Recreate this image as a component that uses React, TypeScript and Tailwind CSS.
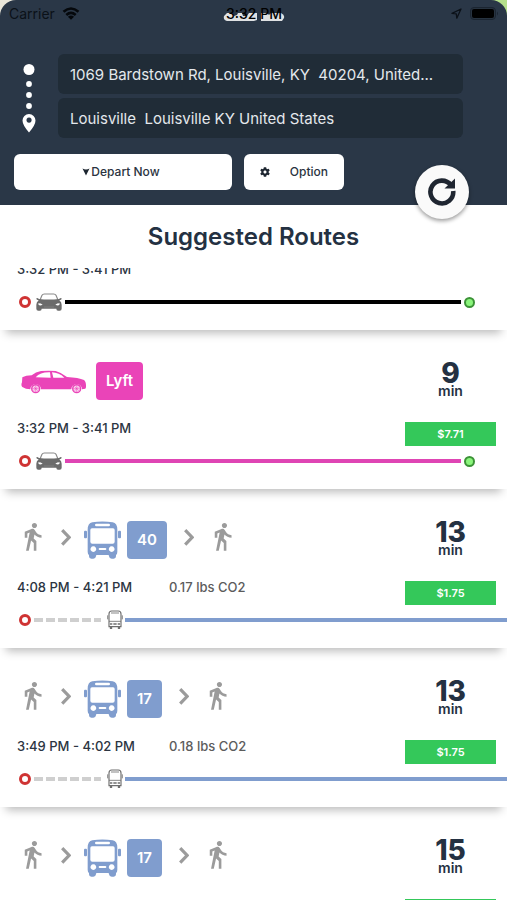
// Import dependencies
import { useState } from 'react';
import { FaCog } from 'react-icons/fa';
import { MdDirectionsWalk } from 'react-icons/md';

type Route = {
    id: number;
    mode: 'car' | 'bus';
    label?: string;
    badge: string;
    line: string;
    minutes?: number;
    time: string;
    co2?: string;
    price?: string;
};

// Route data
const routes: Route[] = [
    { id: 1, mode: 'car', badge: 'bg-black', line: 'bg-black', time: '3:32 PM - 3:41 PM' },
    { id: 2, mode: 'car', label: 'Lyft', badge: 'bg-[#ea44b8]', line: 'bg-[#df45b4]', minutes: 9, time: '3:32 PM - 3:41 PM', price: '$7.71' },
    { id: 3, mode: 'bus', label: '40', badge: 'bg-[#809dce]', line: 'bg-[#809dce]', minutes: 13, time: '4:08 PM - 4:21 PM', co2: '0.17 lbs CO2', price: '$1.75' },
    { id: 4, mode: 'bus', label: '17', badge: 'bg-[#809dce]', line: 'bg-[#809dce]', minutes: 13, time: '3:49 PM - 4:02 PM', co2: '0.18 lbs CO2', price: '$1.75' },
    { id: 5, mode: 'bus', label: '17', badge: 'bg-[#809dce]', line: 'bg-[#809dce]', minutes: 15, time: '4:19 PM - 4:34 PM', co2: '0.18 lbs CO2', price: '$1.75' },
];

// Icons
const Chevron = () => (
    <svg className="h-8 w-[10px] shrink-0" viewBox="0 0 10 32" fill="none" stroke="#9b9b9b" strokeWidth="3.2">
        <path d="M1.2 9.2 8.2 16.4 1.2 23.6" />
    </svg>
);

const BusIcon = () => (
    <svg className="h-[38px] w-[37px] shrink-0" viewBox="0 0 111 114" fill="#809dce">
        <rect x="0" y="29" width="9" height="23" rx="3" />
        <rect x="102" y="29" width="9" height="23" rx="3" />
        <path fillRule="evenodd" d="M11 26Q11 7 25 4 55-1 86 4q14 3 14 22v66q0 8-4 10v4q0 7-7 7h-6q-7 0-8-7l-1-4H37l-1 4q-1 7-8 7h-6q-7 0-7-7v-4q-4-2-4-10ZM37 8q-4 0-4 4t4 4h37q4 0 4-4t-4-4ZM24 22q-5 0-5 5v35q0 6 6 6h61q6 0 6-6V27q0-5-5-5ZM28 76a8.500 8.500 0 1 0 .1 0ZM83 76a8.500 8.500 0 1 0 .1 0ZM47 81q-3 0-3 3t3 3h17q3 0 3-3t-3-3Z" />
    </svg>
);

const SideCarIcon = () => (
    <svg className="h-[38px] w-[66px] shrink-0" viewBox="62 52 198 114">
        <path fill="#ea44b8" fillRule="evenodd" d="M66 98Q76 92 94 92 106 82 122 79 145 77 166 79 184 84 200 97 235 99 251 106 258 111 257 128L255 132 245 134A16 16 0 0 0 213 134H122A16 16 0 0 0 90 134Q76 134 66 127 61 122 65 113ZM106 98 151 99 149 83Q120 82 106 98ZM155 83 159 99H192Q176 84 155 83Z" />
        <circle cx="106" cy="132" r="14" fill="#ea44b8" />
        <circle cx="106" cy="132" r="9.500" fill="#fbd5ef" />
        <circle cx="229" cy="132" r="14" fill="#ea44b8" />
        <circle cx="229" cy="132" r="9.500" fill="#fbd5ef" />
        <path stroke="#ea44b8" strokeWidth="1.500" d="M97 132h18M106 123v18M100 126l12 12M112 126l-12 12M220 132h18M229 123v18M223 126l12 12M235 126l-12 12" />
    </svg>
);

const FrontCarIcon = () => (
    <svg className="h-[18px] w-[26px] shrink-0" viewBox="0 0 78 54" preserveAspectRatio="none">
        <path d="M12 21 18 7q2-4 7-4h28q5 0 7 4l6 14" fill="none" stroke="#8a8a8a" strokeWidth="3.500" />
        <path fill="#6b6b6b" d="M9 18q-7-5-8-1 0 4 7 5Q1 27 1 35v12q0 6 6 6h5q5 0 5-6h44q0 6 5 6h5q6 0 6-6V35q0-8-7-13 7-1 7-5-1-4-8 1-30 3-60 0Z" />
        <path fill="#fff" d="M7 31q8 0 13 4-6 3-10 2-4-2-3-6ZM71 31q-8 0-13 4 6 3 10 2 4-2 3-6Z" />
        <path stroke="#888" strokeWidth="2" d="M24 42h30" />
    </svg>
);

const SmallBusIcon = () => (
    <svg className="h-5 w-4 shrink-0" viewBox="0 0 48 60" fill="none" stroke="#6f6f6f" strokeWidth="3.500">
        <path d="M6 50V12Q6 3 14 3h20q8 0 8 9v38Z" />
        <path d="M12 9h24M6 34h36" strokeWidth="2.500" />
        <path d="M2 16v12M46 16v12" strokeWidth="2.500" />
        <path d="M9 42h7M32 42h7M19 42h10" strokeWidth="4" />
        <path d="M12 50v7M36 50v7" strokeWidth="7" />
    </svg>
);

// Status bar
const StatusBar = () => (
    <div className="grid h-[27px] grid-cols-3 items-center pl-[9px] pr-2 text-[14px] text-[#0b1118]">
        <div className="flex items-center gap-[7px]">
            Carrier
            <svg className="h-[13px] w-[18px]" viewBox="0 0 18 13" fill="none" stroke="#05080c" strokeWidth="2.600">
                <path d="M1.500 4.800Q9-1.800 16.500 4.800M4.300 7.900Q9 3.800 13.700 7.900" />
                <path d="M9 12.800 5.900 9.700Q9 7.400 12.100 9.700Z" fill="#05080c" stroke="none" />
            </svg>
        </div>
        <div className="relative text-center">
            <svg className="absolute left-1/2 top-1/2 h-[9px] w-[62px] -translate-x-1/2 -translate-y-[2px]" viewBox="0 0 62 9" fill="#dfe1e3">
                <path d="M4 1h5l2 3 3-1 1-2h4l1 3h4l2-3h8v7l-3 1H4Q0 8 1 4ZM38 1h6l2 2 2-2h10q4 2 3 5l-2 3H38Z" />
            </svg>
            <span className="relative font-medium text-black">3:32 PM</span>
        </div>
        <div className="flex items-center justify-end gap-2">
            <svg className="h-[11px] w-[11px]" viewBox="0 0 11 11" fill="none" stroke="#0b1118" strokeWidth="1.300" strokeLinejoin="round">
                <path d="M10 1 1 5.400l4.300.5.500 4.300Z" />
            </svg>
            <svg className="h-[13px] w-[29px]" viewBox="0 0 29 13">
                <rect x=".5" y=".5" width="25" height="12" rx="3.500" fill="#273340" stroke="#1b2531" />
                <rect x="2" y="2" width="22" height="9" rx="2" fill="#000" />
                <path d="M27 4.500q2 2 0 4Z" fill="#1b2531" />
            </svg>
        </div>
    </div>
);

// Origin and destination form
const SearchHeader = () => {
    const [origin, setOrigin] = useState('1069 Bardstown Rd, Louisville, KY  40204, United...');
    const [destination, setDestination] = useState('Louisville  Louisville KY United States');

    return (
        <header className="bg-[linear-gradient(to_right,#e9e6da_50%,#b5e08b_50%)]">
            <div className="relative rounded-t-[16px] bg-[#2a3747] pb-[15px]">
                <StatusBar />
                <div className="mt-[27px] flex pr-11">
                    <svg className="ml-[21px] mr-[21px] mt-[9px] h-[70px] w-4 shrink-0" viewBox="0 0 16 70" fill="#fff">
                        <circle cx="8" cy="6.500" r="5.500" />
                        <circle cx="8" cy="21" r="2.900" />
                        <circle cx="8" cy="32" r="2.900" />
                        <circle cx="8" cy="43" r="2.900" />
                        <path fillRule="evenodd" d="M8 69.500Q1.500 62 1.500 57.500a6.500 6.500 0 0 1 13 0Q14.500 62 8 69.500ZM8 54.500a2.600 2.600 0 1 0 .1 0Z" />
                    </svg>
                    <div className="flex min-w-0 flex-1 flex-col gap-1">
                        <input
                        aria-label="Origin"
                        className="h-10 w-full rounded-md bg-[#202c37] px-3 text-[15px] text-[#e4e8ec] outline-none"
                        value={origin}
                        onChange={(e) => setOrigin(e.target.value)}
                        />
                        <input
                        aria-label="Destination"
                        className="h-10 w-full rounded-md bg-[#202c37] px-3 text-[15px] text-[#e4e8ec] outline-none"
                        value={destination}
                        onChange={(e) => setDestination(e.target.value)}
                        />
                    </div>
                </div>
                <div className="mt-4 flex gap-3 pl-[14px] pr-[163px] font-medium text-[#2a3340]">
                    <button className="flex h-9 flex-1 items-center justify-center gap-px rounded-md bg-white pr-1 text-[12px]">
                        <svg className="h-2 w-2" viewBox="0 0 8 8" fill="#1d2630">
                            <path d="M.5.500Q4 2.500 7.500.500L4 7.500Z" />
                        </svg>
                        Depart Now
                    </button>
                    <button className="flex h-9 w-[100px] items-center justify-between rounded-md bg-white px-4 text-[12px]">
                        <FaCog className="h-[10px] w-[10px] text-[#1d2630]" />
                        Option
                    </button>
                </div>
                <button
                aria-label="Refresh routes"
                className="absolute -bottom-[14px] right-[38px] flex h-[54px] w-[54px] items-center justify-center rounded-full bg-[#fafafa] shadow-[0_2px_4px_rgba(0,0,0,0.4)]"
                >
                    <svg className="h-[30px] w-[30px]" viewBox="0 0 30 30">
                        <path d="M24 8.200A11.400 11.400 0 1 0 26.200 14" fill="none" stroke="#1f2631" strokeWidth="4.600" />
                        <path d="M28 1.500V11.500H17.500Z" fill="#1f2631" />
                    </svg>
                </button>
            </div>
        </header>
    );
}

// Single route card
const RouteCard = ({ route }: { route: Route }) => (
    <li className="pb-[18px] pt-[22px] shadow-[0_9px_9px_-6px_rgba(0,0,0,0.28)]">
        <div className="flex h-[38px] justify-between pl-[17px] pr-[11px]">
            {route.label && (route.mode === 'car' ? (
                <div className="flex gap-[9px] pl-1">
                    <SideCarIcon />
                    <span className={`flex items-center rounded px-[10px] text-[15px] font-semibold text-white ${route.badge}`}>{route.label}</span>
                </div>
            ) : (
                <div className="flex gap-[13px] text-[#9b9b9b]">
                    <MdDirectionsWalk className="h-[31px] w-[31px]" />
                    <Chevron />
                    <div className="mr-1 flex gap-[6px]">
                        <BusIcon />
                        <span className={`flex items-center rounded px-[10px] text-[15px] font-semibold text-white ${route.badge}`}>{route.label}</span>
                    </div>
                    <Chevron />
                    <MdDirectionsWalk className="h-[31px] w-[31px]" />
                </div>
            ))}
            {route.minutes && (
                <div className="flex w-[91px] flex-col items-center text-[#243142]">
                    <span className="text-[28px] font-extrabold leading-[22px]">{route.minutes}</span>
                    <span className="text-[14px] font-semibold leading-[14px]">min</span>
                </div>
            )}
        </div>

        <div className="mt-[22px] flex h-6 pl-[17px] pr-[11px]">
            <span className="w-[152px] text-[13px] font-medium leading-[13px] text-[#2c3542]">{route.time}</span>
            {route.co2 && <span className="text-[13px] font-medium leading-[13px] text-[#5c5c5c]">{route.co2}</span>}
            {route.price && (
                <span className="ml-auto flex w-[91px] items-center justify-center bg-[#34c85a] text-[11px] font-semibold text-white">{route.price}</span>
            )}
        </div>

        <div className="mt-[5px] flex h-5 items-center pl-[19px]">
            <span className="h-3 w-3 shrink-0 rounded-full border-[3px] border-[#cf3333]"></span>
            {route.mode === 'car' ? (
                <div className="flex flex-1 items-center gap-[3px] pl-[5px] pr-8">
                    <FrontCarIcon />
                    <span className={`h-1 flex-1 ${route.line}`}></span>
                    <span className="h-[11px] w-[11px] rounded-full border-2 border-[#3c9337] bg-[#8bf57c]"></span>
                </div>
            ) : (
                <div className="flex flex-1 items-center pl-[3px]">
                    <span className="mr-[6px] h-1 w-[67px] bg-[repeating-linear-gradient(to_right,#cfcfcf_0_9px,transparent_9px_12px)]"></span>
                    <SmallBusIcon />
                    <span className={`ml-[2px] h-1 flex-1 ${route.line}`}></span>
                </div>
            )}
        </div>
    </li>
);

// Page
const App = () => {
    return (
        <div className="flex h-screen flex-col overflow-hidden bg-white font-['Inter',sans-serif]">
            <SearchHeader />
            <h1 className="h-[63px] shrink-0 text-center text-[24px] font-semibold leading-[63px] text-[#243142]">Suggested Routes</h1>
            <main className="min-h-0 flex-1 overflow-hidden">
                <ul className="-mt-[87px] flex flex-col gap-[10px]">
                    {routes.map((route) => (
                        <RouteCard key={route.id} route={route} />
                    ))}
                </ul>
            </main>
        </div>
    )
}

export default App;
